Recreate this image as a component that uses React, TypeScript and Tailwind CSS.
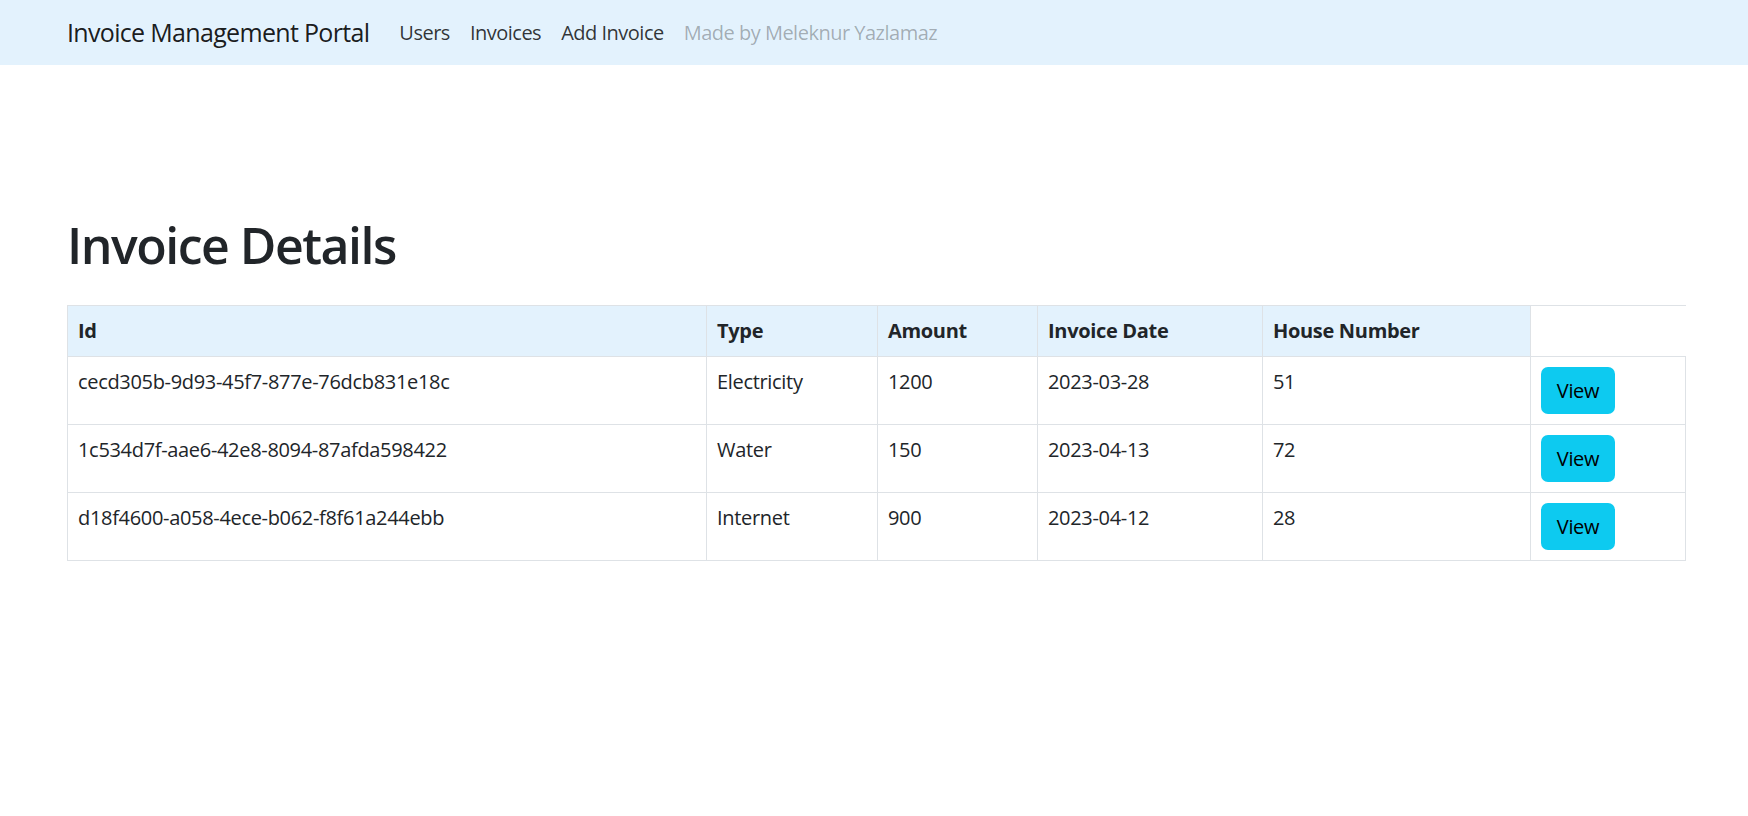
const invoices = [
  { id: 'cecd305b-9d93-45f7-877e-76dcb831e18c', type: 'Electricity', amount: 1200, date: '2023-03-28', house: 51 },
  { id: '1c534d7f-aae6-42e8-8094-87afda598422', type: 'Water', amount: 150, date: '2023-04-13', house: 72 },
  { id: 'd18f4600-a058-4ece-b062-f8f61a244ebb', type: 'Internet', amount: 900, date: '2023-04-12', house: 28 },
];

const navLinks = ['Users', 'Invoices', 'Add Invoice'];

const headers = ['Id', 'Type', 'Amount', 'Invoice Date', 'House Number'];

export default function App() {
  return (
    <div className="min-h-screen bg-white font-['Open_Sans',sans-serif] tracking-[-0.02em] text-[#212529]">
      <nav className="flex h-[65px] items-center bg-[#e3f2fd] pl-[67px]">
        <span className="mr-[20px] text-[25px] leading-[1.5] tracking-[-0.027em] text-black/90">
          Invoice Management Portal
        </span>
        <ul className="flex text-[20px] leading-[1.5] tracking-[-0.025em]">
          {navLinks.map((link) => (
            <li key={link}>
              <a href="#" className="block px-[10px] py-[10px] text-black/80">
                {link}
              </a>
            </li>
          ))}
          <li>
            <span className="block px-[10px] py-[10px] text-black/30">Made by Meleknur Yazlamaz</span>
          </li>
        </ul>
      </nav>

      <main className="pl-[67px] pr-[62px] pt-[150px]">
        <h1 className="mb-[30px] text-[50px] font-semibold leading-[1.2] tracking-[-0.03em]">Invoice Details</h1>
        <table className="w-full table-fixed border-collapse border-t border-[#dee2e6] text-[20px] leading-[1.5]">
          <colgroup>
            <col className="w-[639px]" />
            <col className="w-[171px]" />
            <col className="w-[160px]" />
            <col className="w-[225px]" />
            <col className="w-[268px]" />
            <col />
          </colgroup>
          <thead>
            <tr>
              {headers.map((h) => (
                <th
                  key={h}
                  className="border border-[#dee2e6] bg-[#e3f2fd] p-[10px] text-left align-top font-bold"
                >
                  {h}
                </th>
              ))}
            </tr>
          </thead>
          <tbody>
            {invoices.map((inv) => (
              <tr key={inv.id}>
                <td className="border border-[#dee2e6] p-[10px] align-top">{inv.id}</td>
                <td className="border border-[#dee2e6] p-[10px] align-top">{inv.type}</td>
                <td className="border border-[#dee2e6] p-[10px] align-top">{inv.amount}</td>
                <td className="border border-[#dee2e6] p-[10px] align-top">{inv.date}</td>
                <td className="border border-[#dee2e6] p-[10px] align-top">{inv.house}</td>
                <td className="border border-[#dee2e6] p-[10px] align-top">
                  <button className="h-[47px] w-[74px] rounded-[7px] bg-[#0dcaf0] text-[20px] text-black">
                    View
                  </button>
                </td>
              </tr>
            ))}
          </tbody>
        </table>
      </main>
    </div>
  );
}
